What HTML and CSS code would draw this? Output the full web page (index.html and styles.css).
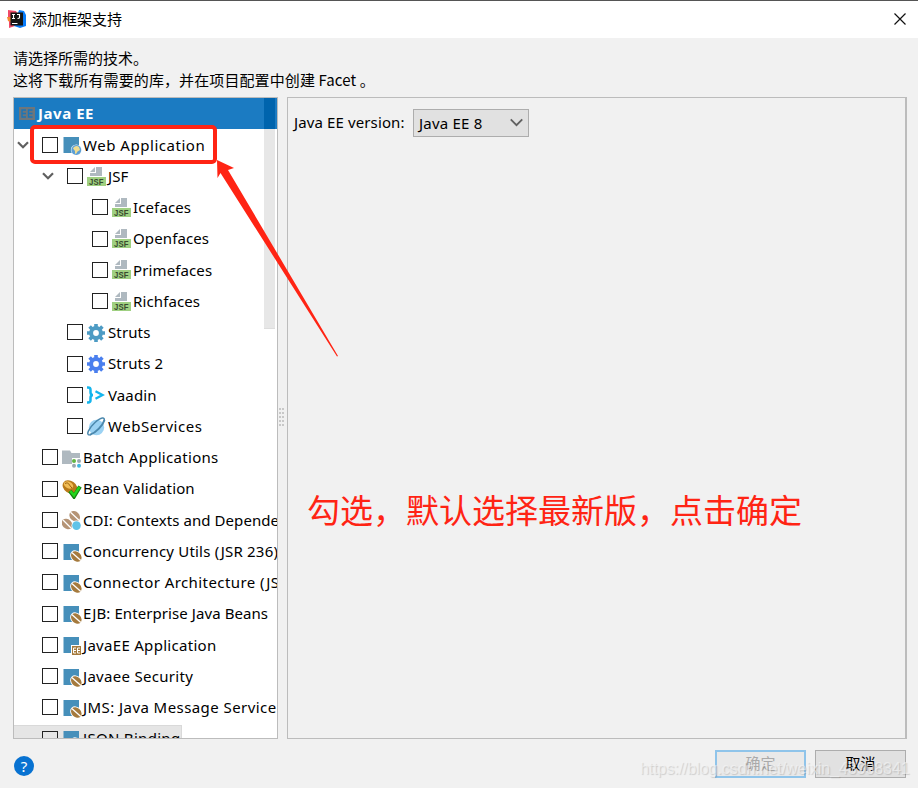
FILE: index.html
```html
<!DOCTYPE html>
<html lang="zh-CN">
<head>
<meta charset="utf-8">
<title>添加框架支持</title>
<link rel="stylesheet" href="styles.css">
</head>
<body>
<svg class="defs" aria-hidden="true">
  <symbol id="chev" viewBox="0 0 12 8"><path d="M1 1.200 6 6.200 11 1.200" fill="none" stroke="#606060" stroke-width="2.200"/></symbol>
  <symbol id="jsf" viewBox="0 0 20 20"><path d="M9 0h6v9H3V6h6z" fill="#afb9c0"/><path d="M8 0v5H3z" fill="#afb9c0"/><path d="M0 10h19v9H0z" fill="#9fd081"/><text x="2" y="17.800" class="jsf-t" textLength="14.500" lengthAdjust="spacingAndGlyphs">JSF</text></symbol>
  <symbol id="mod" viewBox="0 0 20 20"><path d="M1.500 2h15.500v9.500l-6 6.500H1.500z" fill="#468fba"/></symbol>
  <symbol id="web" viewBox="0 0 20 20"><use href="#mod"/><circle cx="14.300" cy="15" r="5.500" fill="#e9f2f8"/><circle cx="14.300" cy="15" r="4.900" fill="#5b9fd6"/><path d="M11 13.500c1-2.500 4-3.200 6-1.500l1 3-2.500 1.500-1.500 2.500-1-.5v-2.500z" fill="#f0dc90"/></symbol>
  <symbol id="bean" viewBox="0 0 20 20"><use href="#mod"/><ellipse cx="14.300" cy="14.500" rx="6.700" ry="5.500" transform="rotate(45 14.300 14.500)" fill="#fff"/><ellipse cx="14.300" cy="14.500" rx="5.900" ry="4.600" transform="rotate(45 14.300 14.500)" fill="#a57a3d"/><path d="M9.800 10.500l9 8" fill="none" stroke="#fff" stroke-width="1.300"/></symbol>
  <symbol id="jee" viewBox="0 0 20 20"><use href="#mod"/><path d="M9 10h10.500v10H9z" fill="#fff"/><path d="M10 11h9v9h-9z" fill="#a57a3d"/><path d="M14 13h-2.500v5H14m-2.500-2.500H14M18 13h-2.500v5H18m-2.500-2.500H18" fill="none" stroke="#fff"/></symbol>
  <symbol id="gear" viewBox="0 0 20 20"><circle cx="9" cy="10" r="4.900" fill="none" stroke="currentColor" stroke-width="4"/><path d="M9 1v3M9 16v3M0 10h3M15 10h3M2.600 3.600l2.200 2.200M13.200 14.200l2.200 2.200M2.600 16.400l2.200-2.200M13.200 5.800l2.200-2.200" stroke="currentColor" stroke-width="3.600"/></symbol>
  <symbol id="vaadin" viewBox="0 0 20 20"><path d="M0 2.500h1q2.500 0 2.500 2.200v2.500q0 2.800 2.500 2.800-2.500 0-2.500 2.800v2.500q0 2.200-2.500 2.200H0" fill="none" stroke="#14b5ed" stroke-width="2.500"/><path d="m8.500 6.300 7 3.700-7 3.700" fill="none" stroke="#14b5ed" stroke-width="2.300"/></symbol>
  <symbol id="ws" viewBox="0 0 20 20"><circle cx="9.500" cy="10.500" r="7.700" fill="#9bd2f3"/><path d="M2.500 18C-1.500 18 2 11 8 5.500S18.500-.5 17 4" fill="none" stroke="#4b88ad" stroke-width="1.500"/><path d="M2.500 18C9 16 16 8 17.500 3" fill="none" stroke="#4b88ad" stroke-width="2"/></symbol>
  <symbol id="batch" viewBox="0 0 20 20"><path d="M0 2.500h8L9.500 5H18v5h-8v6H0z" fill="#afb9c0"/><circle cx="17" cy="13" r="2" fill="#9aa7b0"/><circle cx="12" cy="17.700" r="2" fill="#9aa7b0"/><circle cx="12" cy="13" r="2" fill="#62b543"/><circle cx="17" cy="17.700" r="2" fill="#40b6e0"/></symbol>
  <symbol id="valid" viewBox="0 0 20 20"><ellipse cx="8" cy="8" rx="8" ry="6" transform="rotate(35 8 8)" fill="#b97a19"/><ellipse cx="6.500" cy="6" rx="5" ry="3.300" transform="rotate(25 6.500 6)" fill="#f1bd56"/><path d="M3 4.500c4-2 4 2 7 4.500" fill="none" stroke="#9a6310"/><path d="m8 12 4 5.500L18 7.500" fill="none" stroke="#168011" stroke-width="4"/><path d="m8.300 12 3.700 4.500L17.500 8" fill="none" stroke="#23d51c" stroke-width="2.500"/></symbol>
  <symbol id="cdi" viewBox="0 0 20 20"><ellipse cx="12.700" cy="6.300" rx="5.900" ry="4.700" transform="rotate(45 12.700 6.300)" fill="#b59476"/><ellipse cx="5" cy="14" rx="5.900" ry="4.700" transform="rotate(45 5 14)" fill="#b59476"/><path d="M8.500 2.300l8.500 8M1 10l8 8" fill="none" stroke="#fff" stroke-width="1.300"/><circle cx="14.500" cy="15.600" r="5" fill="#fff"/><circle cx="14.500" cy="15.600" r="4.300" fill="#5fc3e8"/></symbol>
</svg>

<div class="dialog">
  <header class="titlebar">
    <svg class="logo" viewBox="0 0 20 20"><path d="M1 1l8 1 4 8-5 7-6 2V13L1 9z" fill="#f04a68"/><path d="M0 8h5v5l-4-1z" fill="#f58a31"/><path d="M12 1l5 1 2 4v11l-6 2-6-2z" fill="#087cfa"/><path d="M3.500 3.500H16v13H3.500z" fill="#151515"/><path d="M5 5.500h3M6.500 5.500v4M5 9.500h3M10 5.500h2.500v3q0 1-2 1M5 14.500h5.500" fill="none" stroke="#fff" stroke-width="1.100"/></svg>
    <h1 class="title">添加框架支持</h1>
    <svg class="close" viewBox="0 0 12 12"><path d="M.5.5l11 11M11.500.5l-11 11" stroke="#111" stroke-width="1.200"/></svg>
  </header>

  <div class="intro"><p>请选择所需的技术。</p><p class="wider">这将下载所有需要的库，并在项目配置中创建 Facet 。</p></div>

  <main class="panes">
    <section class="tree">
      <div class="row group"><svg class="ee" viewBox="0 0 16 13"><path d="M0 0h16v13H0z" fill="#6e767b"/><path d="M7 3H3v7h4M3 6.500h4M13.500 3h-4v7h4M9.500 6.500h4" fill="none" stroke="#1b75b8" stroke-width="1.400"/></svg><span>Java EE</span></div>
      <div class="row l1 s5"><svg class="arrow"><use href="#chev"/></svg><i class="box"></i><svg class="icon"><use href="#web"/></svg><span>Web Application</span></div>
      <div class="row l2"><svg class="arrow"><use href="#chev"/></svg><i class="box"></i><svg class="icon"><use href="#jsf"/></svg><span>JSF</span></div>
      <div class="row l3"><i class="box"></i><svg class="icon"><use href="#jsf"/></svg><span>Icefaces</span></div>
      <div class="row l3"><i class="box"></i><svg class="icon"><use href="#jsf"/></svg><span>Openfaces</span></div>
      <div class="row l3"><i class="box"></i><svg class="icon"><use href="#jsf"/></svg><span>Primefaces</span></div>
      <div class="row l3"><i class="box"></i><svg class="icon"><use href="#jsf"/></svg><span>Richfaces</span></div>
      <div class="row l2"><i class="box"></i><svg class="icon teal"><use href="#gear"/></svg><span>Struts</span></div>
      <div class="row l2"><i class="box"></i><svg class="icon blue"><use href="#gear"/></svg><span>Struts 2</span></div>
      <div class="row l2"><i class="box"></i><svg class="icon"><use href="#vaadin"/></svg><span>Vaadin</span></div>
      <div class="row l2 s5"><i class="box"></i><svg class="icon"><use href="#ws"/></svg><span>WebServices</span></div>
      <div class="row l1 s3"><i class="box"></i><svg class="icon"><use href="#batch"/></svg><span>Batch Applications</span></div>
      <div class="row l1"><i class="box"></i><svg class="icon"><use href="#valid"/></svg><span>Bean Validation</span></div>
      <div class="row l1 s1"><i class="box"></i><svg class="icon"><use href="#cdi"/></svg><span>CDI: Contexts and Dependency Injection</span></div>
      <div class="row l1 s2"><i class="box"></i><svg class="icon"><use href="#bean"/></svg><span>Concurrency Utils (JSR 236)</span></div>
      <div class="row l1 s4"><i class="box"></i><svg class="icon"><use href="#bean"/></svg><span>Connector Architecture (JSR 322)</span></div>
      <div class="row l1 s1"><i class="box"></i><svg class="icon"><use href="#bean"/></svg><span>EJB: Enterprise Java Beans</span></div>
      <div class="row l1 s3"><i class="box"></i><svg class="icon"><use href="#jee"/></svg><span>JavaEE Application</span></div>
      <div class="row l1 s3"><i class="box"></i><svg class="icon"><use href="#bean"/></svg><span>Javaee Security</span></div>
      <div class="row l1 s4"><i class="box"></i><svg class="icon"><use href="#bean"/></svg><span>JMS: Java Message Service</span></div>
      <div class="row l1 s3 hover"><i class="box"></i><svg class="icon"><use href="#bean"/></svg><span>JSON Binding</span></div>
      <div class="thumb"></div>
    </section>
    <div class="splitter"><i class="grip"></i></div>
    <section class="detail">
      <div class="field"><label>Java EE version:</label><div class="select"><span>Java EE 8</span><svg class="caret" viewBox="0 0 12 8"><path d="M.7 1.200 6 6.500l5.300-5.300" fill="none" stroke="#606060" stroke-width="1.700"/></svg></div></div>
    </section>
  </main>

  <footer class="footer">
    <span class="help">?</span>
    <button class="btn ok">确定</button>
    <button class="btn">取消</button>
  </footer>

  <div class="note">勾选，默认选择最新版，点击确定</div>
  <div class="mark"></div>
  <svg class="pointer" viewBox="0 0 122 198"><path d="M0 0l17 8-6 2 110 186-1 .5L3.500 13 .5 18z" fill="#ff2414"/></svg>
  <div class="watermark">https://blog.csdn.net/weixin_43908341</div>
</div>
</body>
</html>
```
FILE: styles.css
```css
* { box-sizing: border-box; }
body { margin: 0; font-family: "Noto Sans", "Noto Sans CJK SC", sans-serif; font-size: 15px; color: #000; }
p, h1 { margin: 0; }
svg { display: block; flex: none; }
.defs { position: absolute; width: 0; height: 0; }
.dialog { position: relative; display: flex; flex-direction: column; width: 918px; height: 788px; background: #f1f1f1; overflow: hidden; }
.titlebar { display: flex; align-items: center; height: 38px; padding: 0 12px 2px 7px; background: #fff; border-top: 1px solid #555; }
.logo { width: 20px; height: 20px; }
.title { flex: 1; margin-left: 5px; font: 15px/24px "Noto Sans CJK SC", sans-serif; }
.close { width: 12px; height: 12px; }
.intro { height: 59px; padding: 9px 13px 0; font-family: "Noto Sans CJK SC", sans-serif; line-height: 22px; }
.wider { letter-spacing: .1px; }
.panes { display: flex; height: 642px; padding: 0 11px 0 13px; }
.tree { position: relative; width: 265px; border: 1px solid #bcbcbc; background: #fff; overflow: hidden; }
.row { display: flex; align-items: center; height: 31.25px; letter-spacing: .12px; white-space: nowrap; }
.row span { position: relative; z-index: 1; margin-top: -.5px; line-height: 20px; }
.s1 { letter-spacing: .08px; }
.s2 { letter-spacing: .2px; }
.s3 { letter-spacing: .3px; }
.s4 { letter-spacing: .43px; }
.s5 { letter-spacing: .53px; }
.group { padding-left: 5px; background: linear-gradient(90deg, transparent 250px, #0064ad 250px, #0064ad 261px, transparent 261px) #1b7bc2; color: #fff; font-weight: 700; letter-spacing: .55px; }
.group span { margin-top: -2px; }
.ee { width: 16px; height: 13px; margin-right: 3px; }
.l1 { padding-left: 28px; }
.l2 { padding-left: 53px; }
.l3 { padding-left: 78px; }
.arrow { width: 12px; height: 8px; margin: 0 13px 0 -25px; }
.box { flex: none; width: 16px; height: 16px; border: 1px solid #222; background: #fff; }
.icon { width: 20px; height: 20px; margin: 1px 1px 0 4px; }
.jsf-t { font: 700 9px "Liberation Sans", sans-serif; fill: #394b30; }
.teal { color: #4d9bc4; }
.blue { color: #4a7fee; }
.hover { width: 168px; margin-top: 2px; padding-bottom: 5px; background: #e5e5e5; border-top: 1px solid #d9d9d9; border-right: 1px solid #d9d9d9; }
.hover .box { background: #e5e5e5; }
.thumb { position: absolute; left: 250px; top: 31px; width: 11px; height: 200px; background: #e7e7e7; border-bottom: 1px solid #ddd; }
.splitter { display: flex; align-items: center; width: 9px; }
.grip { width: 5px; height: 19px; margin: -2px 0 0 1px; background: repeating-linear-gradient(90deg, transparent 0 2px, #f1f1f1 2px 3px), repeating-linear-gradient(#c8c8c8 0 2px, #f1f1f1 2px 4px); }
.detail { flex: 1; border: 1px solid #bcbcbc; border-right-width: 2px; padding: 11px 6px; }
.field { display: flex; align-items: center; }
.field label { width: 111px; margin-top: -2px; letter-spacing: .12px; }
.select { display: flex; align-items: center; justify-content: space-between; width: 116px; height: 28px; margin-left: 8px; padding: 0 5px; border: 1px solid #adadad; background: #e1e1e1; letter-spacing: .2px; }
.caret { width: 13px; height: 9px; margin-top: -2px; }
.footer { display: flex; align-items: center; flex: 1; padding: 0 12px 0 14px; }
.help { display: grid; place-items: center; width: 20px; height: 20px; margin: 4px auto 0 0; border-radius: 50%; background: #0872d1; color: #fff; font-size: 15px; }
.btn { width: 91px; height: 28px; margin: 1px 0 0 9px; padding: 0 0 2px; border: 1px solid #adadad; background: #e1e1e1; color: #000; font: 15px/20px "Noto Sans CJK SC", sans-serif; }
.ok { border: 2px solid #8fc4ea; background: #e9e9e9; color: #aaa; }
.note { position: absolute; left: 307px; top: 484px; color: #ff2414; font: 33px/50px "Noto Sans CJK SC", sans-serif; white-space: nowrap; }
.mark { position: absolute; left: 30px; top: 125px; width: 187px; height: 39px; border: 4px solid #ff2414; border-radius: 5px; z-index: 2; }
.pointer { position: absolute; left: 217px; top: 160px; width: 122px; height: 198px; z-index: 2; }
.watermark { position: absolute; left: 640px; top: 760px; color: rgba(245,245,245,.65); text-shadow: 1px 1px 1px rgba(0,0,0,.15); font: 16px/18px "Liberation Sans", sans-serif; letter-spacing: -.07px; white-space: nowrap; }
```
